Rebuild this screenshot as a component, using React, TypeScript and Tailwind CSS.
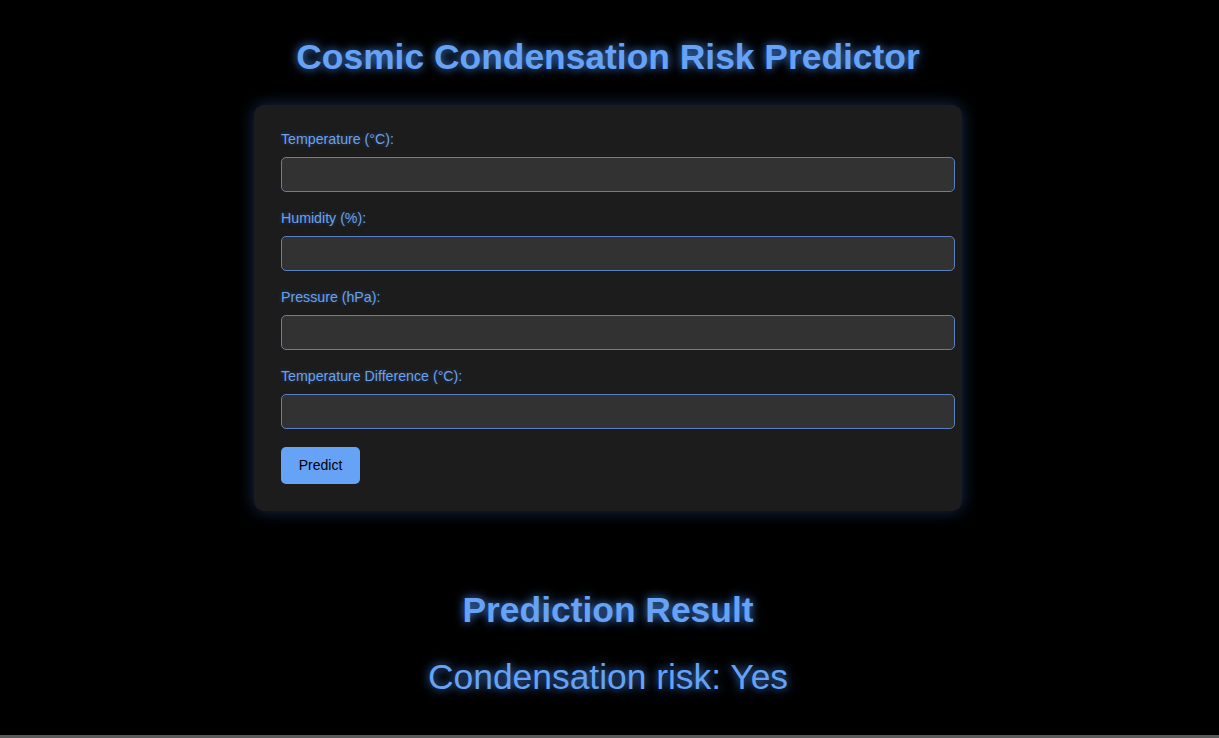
import React from 'react';

const fields = [
  { id: 'temperature', label: 'Temperature (°C):' },
  { id: 'humidity', label: 'Humidity (%):' },
  { id: 'pressure', label: 'Pressure (hPa):' },
  { id: 'tempDiff', label: 'Temperature Difference (°C):' },
];

export default function App() {
  return (
    <div className="min-h-[738px] bg-black flex flex-col font-['Liberation_Sans',Arial,sans-serif]">
      <div className="flex-1 flex flex-col items-center pr-[3px]">
        <h1 className="mt-[36px] text-[35.4px] leading-[42px] font-bold text-[#66a3f7] [text-shadow:0_0_10px_rgba(80,150,255,0.9)]">
          Cosmic Condensation Risk Predictor
        </h1>

        <form
          className="mt-[27px] w-[708px] rounded-[10px] bg-[#1c1c1c] pl-[27px] pt-[26px] pb-[27px] shadow-[0_0_16px_rgba(70,130,230,0.35)]"
          onSubmit={(e) => e.preventDefault()}
        >
          {fields.map((f) => (
            <div key={f.id} className="mb-[18px]">
              <label
                htmlFor={f.id}
                className="block text-[14.2px] leading-[16px] text-[#6aa2ee] [text-shadow:0_0_4px_rgba(80,150,255,0.35)]"
              >
                {f.label}
              </label>
              <input
                id={f.id}
                type="number"
                className="mt-[10px] block w-[674px] h-[35px] rounded-[5px] border border-[#5a7fc0] bg-[#323232] px-[10px] text-white outline-none"
              />
            </div>
          ))}
          <button
            type="submit"
            className="w-[79px] h-[37px] rounded-[5px] bg-[#66a3f7] text-[14px] text-black"
          >
            Predict
          </button>
        </form>

        <h2 className="mt-[78px] text-[35.4px] leading-[42px] font-bold text-[#66a3f7] [text-shadow:0_0_10px_rgba(80,150,255,0.9)]">
          Prediction Result
        </h2>
        <p className="mt-[25px] text-[35.4px] leading-[42px] text-[#66a3f7] [text-shadow:0_0_10px_rgba(80,150,255,0.9)]">
          Condensation risk: Yes
        </p>
      </div>
      <div className="h-[3px] bg-[#5a5a5a]" />
    </div>
  );
}
